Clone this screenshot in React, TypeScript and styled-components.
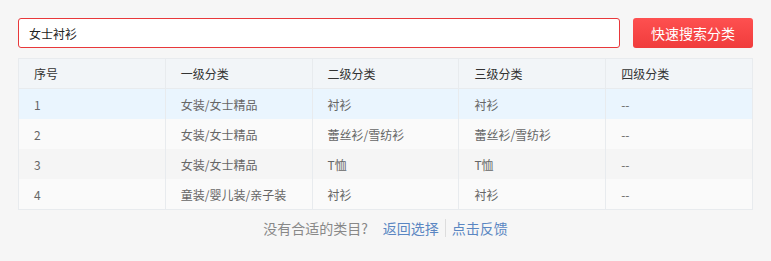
import React from "react";
import styled, { createGlobalStyle } from "styled-components";

const Global = createGlobalStyle`
  html, body { margin: 0; padding: 0; background: #f6f6f6; }
  body { font-family: "Noto Sans CJK SC", "Noto Sans", sans-serif; }
`;

const Page = styled.div`
  padding: 18px 18px 0 18px;
  width: 735px;
`;

const SearchBar = styled.div`
  display: flex;
  gap: 13px;
  align-items: stretch;
`;

const Input = styled.input`
  flex: 1;
  height: 30px;
  box-sizing: border-box;
  border: 1px solid #e8383b;
  border-radius: 3px;
  background: #fff;
  padding: 0 10px;
  font-family: inherit;
  font-size: 12px;
  color: #222;
  outline: none;
`;

const Button = styled.button`
  width: 120px;
  height: 30px;
  border: none;
  border-radius: 3px;
  background: linear-gradient(#fe5050, #f03c3c);
  color: #fff;
  font-family: inherit;
  font-size: 14px;
  padding: 0;
  cursor: pointer;
`;

const Table = styled.div`
  margin-top: 10px;
  border: 1px solid #e8ebee;
  border-right: none;
  display: grid;
  grid-template-columns: repeat(5, 1fr);
`;

const Cell = styled.div<{ $bg: string; $head?: boolean }>`
  height: 30px;
  display: flex;
  align-items: center;
  padding-left: 15px;
  background: ${(p) => p.$bg};
  border-right: 1px solid #e8ebee;
  border-bottom: ${(p) => (p.$head ? "1px solid #e8ebee" : "none")};
  box-sizing: border-box;
  font-size: 12px;
  color: ${(p) => (p.$head ? "#333" : "#666")};
`;

const Footer = styled.div`
  display: flex;
  justify-content: center;
  align-items: center;
  margin-top: 8px;
  font-size: 14px;
  color: #888;
  height: 20px;
`;

const Prompt = styled.span`
  margin-right: 15px;
`;

const Link = styled.a`
  color: #5a86c2;
  text-decoration: none;
  cursor: pointer;
`;

const Divider = styled.span`
  width: 1px;
  height: 18px;
  background: #ddd;
  margin: 0 6px;
`;

const head = ["序号", "一级分类", "二级分类", "三级分类", "四级分类"];
const rows = [
  ["1", "女装/女士精品", "衬衫", "衬衫", "--"],
  ["2", "女装/女士精品", "蕾丝衫/雪纺衫", "蕾丝衫/雪纺衫", "--"],
  ["3", "女装/女士精品", "T恤", "T恤", "--"],
  ["4", "童装/婴儿装/亲子装", "衬衫", "衬衫", "--"],
];
const rowBg = ["#eaf5fe", "#fafafa", "#f5f5f5", "#fafafa"];

export default function App() {
  return (
    <>
      <Global />
      <Page>
        <SearchBar>
          <Input defaultValue="女士衬衫" />
          <Button>快速搜索分类</Button>
        </SearchBar>
        <Table>
          {head.map((h) => (
            <Cell key={h} $bg="#f2f5f8" $head>
              {h}
            </Cell>
          ))}
          {rows.map((r, i) =>
            r.map((c, j) => (
              <Cell key={`${i}-${j}`} $bg={rowBg[i]}>
                {c}
              </Cell>
            ))
          )}
        </Table>
        <Footer>
          <Prompt>没有合适的类目?</Prompt>
          <Link>返回选择</Link>
          <Divider />
          <Link>点击反馈</Link>
        </Footer>
      </Page>
    </>
  );
}
